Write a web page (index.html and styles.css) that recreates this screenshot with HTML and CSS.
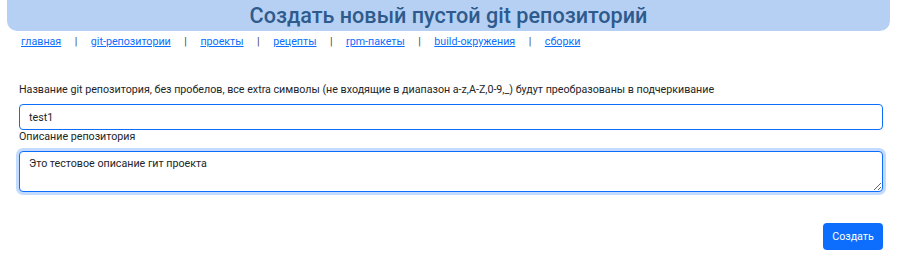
FILE: index.html
```html
<!DOCTYPE html>
<html lang="ru">
<head>
  <meta charset="UTF-8">
  <meta name="viewport" content="width=device-width, initial-scale=1.0">
  <title>Создать новый пустой git репозиторий</title>
  <link rel="stylesheet" href="styles.css">
</head>
<body>
  <!-- Header -->
  <div class="header">
    <h1>Создать новый пустой git репозиторий</h1>
  </div>

  <!-- Navigation -->
  <nav class="menu">
    <a href="#">главная</a>
    <span class="sep">|</span>
    <a href="#">git-репозитории</a>
    <span class="sep">|</span>
    <a href="#">проекты</a>
    <span class="sep">|</span>
    <a href="#">рецепты</a>
    <span class="sep">|</span>
    <a href="#">rpm-пакеты</a>
    <span class="sep">|</span>
    <a href="#">build-окружения</a>
    <span class="sep">|</span>
    <a href="#">сборки</a>
  </nav>

  <!-- Form -->
  <form class="repo-form">
    <label for="repo-name">Название git репозитория, без пробелов, все extra символы (не входящие в диапазон a-z,A-Z,0-9,_) будут преобразованы в подчеркивание</label>
    <input type="text" id="repo-name" class="field" value="test1">

    <label for="repo-descr">Описание репозитория</label>
    <textarea id="repo-descr" class="field area">Это тестовое описание гит проекта</textarea>

    <div class="actions">
      <button type="submit">Создать</button>
    </div>
  </form>
</body>
</html>
```

FILE: styles.css
```css
/* Base */
body {
  font-family: Roboto, 'Liberation Sans', sans-serif;
  margin: 0;
  padding: 0;
  background: #ffffff;
  color: #212529;
  font-size: 10.7px;
}

/* Header */
.header {
  margin: 0 21px 0 7px;
  height: 31px;
  background: #b6d0f4;
  border-radius: 0 0 10px 10px;
  display: flex;
  align-items: center;
  justify-content: center;
}

h1 {
  margin: 0;
  font-size: 21.6px;
  font-weight: 500;
  color: #2e5b8c;
}

/* Navigation */
.menu {
  display: flex;
  gap: 13.5px;
  padding: 4px 0 0 21px;
  font-size: 10.7px;
  line-height: 14px;
}

.menu a {
  color: #0d6efd;
  text-decoration: underline;
}

.sep {
  color: #444;
}

/* Form */
.repo-form {
  display: flex;
  flex-direction: column;
  padding: 34px 28px 0 19px;
}

label {
  display: block;
  line-height: 13px;
  margin-bottom: 8px;
}

.field {
  font-family: inherit;
  font-size: 10.7px;
  color: #212529;
  border: 1px solid #0d6efd;
  border-radius: 4px;
  padding: 0 9px;
  margin: 0;
  box-sizing: border-box;
  outline: none;
}

input.field {
  height: 26px;
}

.area {
  height: 41px;
  padding-top: 5px;
  resize: vertical;
  box-shadow: 0 0 0 3px rgba(13, 110, 253, 0.25);
}

.actions {
  display: flex;
  justify-content: flex-end;
  margin-top: 31px;
}

button {
  font-family: inherit;
  font-size: 10.7px;
  color: #fff;
  background: #0d6efd;
  border: none;
  border-radius: 4px;
  width: 60px;
  height: 27px;
  padding: 0;
  cursor: pointer;
}
```
